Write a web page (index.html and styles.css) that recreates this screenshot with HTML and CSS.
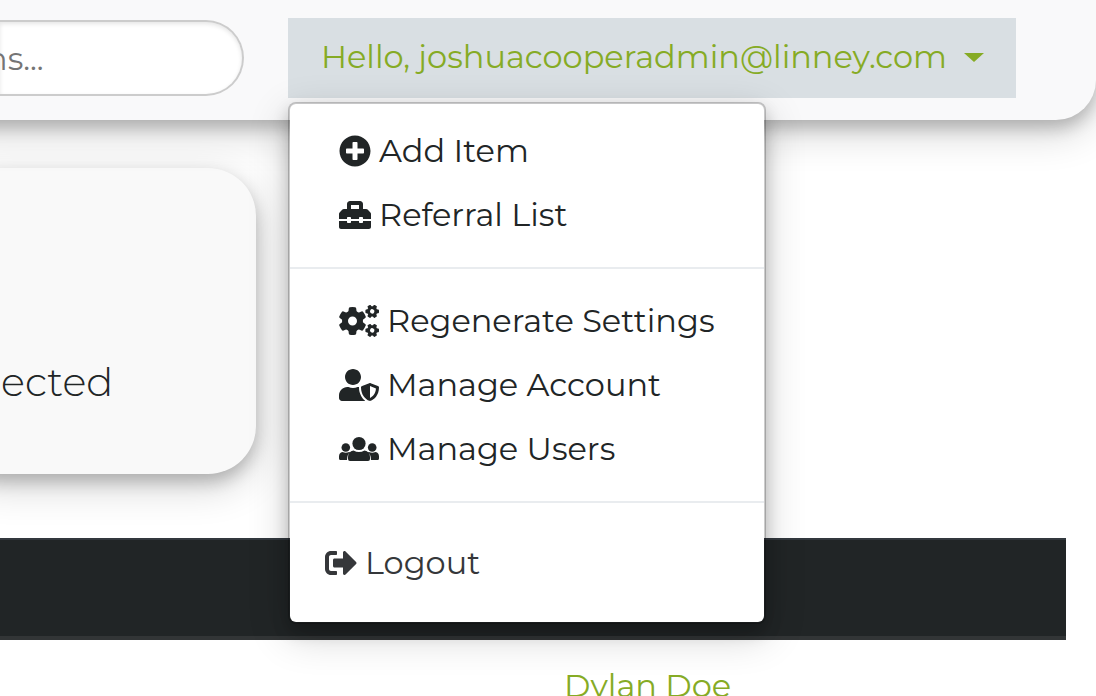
FILE: index.html
```html
<!DOCTYPE html>
<html lang="en">
<head>
  <meta charset="UTF-8">
  <title>Dashboard</title>
  <meta name="viewport" content="width=device-width, initial-scale=1.0">
  <link rel="stylesheet" href="styles.css">
</head>
<body>

  <!-- Top bar -->
  <header class="topbar">
    <div class="search-wrap">
      <input type="text" class="search" placeholder="ns..." aria-label="Search">
    </div>
    <div class="dropdown">
      <button type="button" class="dropdown-toggle">
        <span>Hello, joshuacooperadmin@linney.com</span>
        <span class="caret"></span>
      </button>

      <nav class="dropdown-menu">
        <a href="#" class="dropdown-item">
          <svg class="icon" viewBox="0 0 512 512"><path d="M256 8C119 8 8 119 8 256s111 248 248 248 248-111 248-248S393 8 256 8zm144 276c0 6.6-5.4 12-12 12h-92v92c0 6.6-5.4 12-12 12h-56c-6.6 0-12-5.4-12-12v-92h-92c-6.6 0-12-5.4-12-12v-56c0-6.6 5.4-12 12-12h92v-92c0-6.6 5.4-12 12-12h56c6.6 0 12 5.4 12 12v92h92c6.6 0 12 5.4 12 12v56z"/></svg>
          Add Item
        </a>
        <a href="#" class="dropdown-item">
          <svg class="icon" viewBox="0 0 512 512"><path d="M502.63 214.63l-45.25-45.25c-6-6-14.14-9.37-22.63-9.37H384V80c0-26.51-21.49-48-48-48H176c-26.51 0-48 21.49-48 48v80H77.25c-8.49 0-16.62 3.37-22.63 9.37L9.37 214.63c-6 6-9.37 14.14-9.37 22.63V320h128v-16c0-8.84 7.16-16 16-16h32c8.84 0 16 7.16 16 16v16h128v-16c0-8.84 7.16-16 16-16h32c8.84 0 16 7.16 16 16v16h128v-82.75c0-8.48-3.37-16.62-9.37-22.62zM320 160H192V96h128v64zm64 208c0 8.84-7.16 16-16 16h-32c-8.84 0-16-7.16-16-16v-16H192v16c0 8.84-7.16 16-16 16h-32c-8.84 0-16-7.16-16-16v-16H0v96c0 17.67 14.33 32 32 32h448c17.67 0 32-14.33 32-32v-96H384v16z"/></svg>
          Referral List
        </a>
        <hr class="divider">
        <a href="#" class="dropdown-item">
          <svg class="icon icon-wide" viewBox="0 0 40 32">
            <g id="gear">
              <circle cx="13.5" cy="16" r="7.5" fill="none" stroke="currentColor" stroke-width="6"/>
              <path id="teeth" d="M9.8 3.5q0-1 1-1.200 2.700-.4 5.400 0 1 .2 1 1.200l.5 4h-8.400zM9.800 28.500q0 1 1 1.200 2.700.4 5.400 0 1-.2 1-1.200l.5-4h-8.400z"/>
              <use href="#teeth" transform="rotate(60 13.5 16)"/>
              <use href="#teeth" transform="rotate(120 13.5 16)"/>
            </g>
            <use href="#gear" transform="translate(33.2 6.4) rotate(30) scale(.49) translate(-13.5 -16)"/>
            <use href="#gear" transform="translate(33.2 25.4) rotate(30) scale(.49) translate(-13.5 -16)"/>
          </svg>
          Regenerate Settings
        </a>
        <a href="#" class="dropdown-item">
          <svg class="icon icon-wide" viewBox="0 0 640 512"><path d="M622.3 271.1l-115.2-45c-4.1-1.6-12.6-3.7-22.2 0l-115.2 45c-10.7 4.2-17.7 14-17.7 24.9 0 111.6 68.7 188.8 132.9 213.9 9.6 3.7 18 1.6 22.2 0C558.4 489.9 640 420.5 640 296c0-10.9-7-20.7-17.7-24.9zM496 462.4V273.3l95.5 37.3c-5.6 87.1-60.9 135.4-95.5 151.8zM224 256c70.7 0 128-57.3 128-128S294.7 0 224 0 96 57.3 96 128s57.3 128 128 128zm96 40c0-2.5.8-4.8 1.1-7.2-2.5-.1-4.9-.8-7.5-.8h-16.7c-22.2 10.2-46.9 16-72.9 16s-50.6-5.8-72.9-16h-16.7C60.2 288 0 348.2 0 422.4V464c0 26.5 21.5 48 48 48h352c6.8 0 13.3-1.5 19.2-4-54-42.9-99.2-116.7-99.2-212z"/></svg>
          Manage Account
        </a>
        <a href="#" class="dropdown-item">
          <svg class="icon icon-wide" viewBox="0 0 40 32">
            <circle cx="20" cy="10.5" r="6.6"/>
            <circle cx="6.8" cy="14.5" r="4.3"/>
            <circle cx="33.2" cy="14.5" r="4.3"/>
            <path d="M14.5 17.5q5.5 3 11 0 5.500 1 5.500 6.500v2q0 2-2 2H11q-2 0-2-2v-2q0-5.500 5.500-6.500z"/>
            <path d="M3.5 19q3.300 1.500 6.600 0l1.200.3Q8 21.500 8 27H1.500Q0 27 0 25.500V23.500q0-4 3.500-4.500zM36.500 19q-3.300 1.500-6.600 0l-1.200.3Q32 21.500 32 27h6.500q1.500 0 1.500-1.500V23.500q0-4-3.500-4.500z"/>
          </svg>
          Manage Users
        </a>
        <hr class="divider">
        <button type="button" class="dropdown-item logout">
          <svg class="icon" viewBox="0 0 512 512"><path d="M497 273L329 441c-15 15-41 4.5-41-17v-96H152c-13.3 0-24-10.7-24-24v-96c0-13.3 10.7-24 24-24h136V88c0-21.4 25.9-32 41-17l168 168c9.3 9.4 9.3 24.6 0 34zM192 436v-40c0-6.6-5.4-12-12-12H96c-17.7 0-32-14.3-32-32V160c0-17.7 14.3-32 32-32h84c6.6 0 12-5.4 12-12V76c0-6.6-5.4-12-12-12H96c-53 0-96 43-96 96v192c0 53 43 96 96 96h84c6.6 0 12-5.4 12-12z"/></svg>
          Logout
        </button>
      </nav>
    </div>
  </header>

  <main>
    <section class="card">
      <p class="card-text">ected</p>
    </section>

    <table class="people">
      <thead>
        <tr><th></th></tr>
      </thead>
      <tbody>
        <tr><td><a href="#">Dylan Doe</a></td></tr>
      </tbody>
    </table>
  </main>

</body>
</html>
```
FILE: styles.css
```css
* {
  box-sizing: border-box;
}

body {
  margin: 0;
  height: 100vh;
  overflow: hidden;
  font-family: Montserrat, Inter, sans-serif;
  font-size: 32px;
  line-height: 48px;
  color: #212526;
  background: #fff;
}

a {
  color: #86ab25;
  text-decoration: none;
}

/* Top bar */
.topbar {
  position: relative;
  z-index: 10;
  display: flex;
  align-items: center;
  gap: 44px;
  height: 120px;
  margin-left: -48px;
  padding: 0 80px 4px 48px;
  background: #f9f9fa;
  border-bottom-right-radius: 40px;
  box-shadow: 0 8px 16px rgba(0, 0, 0, 0.2), 0 12px 40px rgba(0, 0, 0, 0.19);
}

.search-wrap {
  flex: none;
  width: 244px;
}

.search {
  width: 100%;
  height: 76px;
  padding: 0 32px 0 0;
  border: 2px solid #ccc;
  border-left: 0;
  border-radius: 0 38px 38px 0;
  background: #fff;
  box-shadow: inset 0 2px 4px rgba(0, 0, 0, 0.1);
  font: inherit;
  text-indent: -14px;
}

.search::placeholder {
  color: #757575;
  opacity: 1;
}

/* User dropdown */
.dropdown {
  position: relative;
  flex: 1;
}

.dropdown-toggle {
  display: flex;
  align-items: center;
  justify-content: space-between;
  width: 100%;
  height: 80px;
  padding: 0 32px 2px 33px;
  border: 0;
  background: #d9dfe3;
  color: #86ab25;
  font: inherit;
  white-space: nowrap;
}

.caret {
  border-top: 9px solid;
  border-left: 10px solid transparent;
  border-right: 10px solid transparent;
}

.dropdown-menu {
  position: absolute;
  top: 100%;
  left: 0;
  width: 478px;
  margin-top: 4px;
  padding: 15px 0 19px;
  border: 2px solid rgba(0, 0, 0, 0.2);
  border-radius: 8px;
  background: #fff;
  background-clip: padding-box;
  box-shadow: 0 8px 16px rgba(0, 0, 0, 0.2), 0 12px 40px rgba(0, 0, 0, 0.19);
}

.dropdown-item {
  display: flex;
  align-items: center;
  gap: 8px;
  width: 100%;
  height: 64px;
  padding: 0 49px;
  border: 0;
  background: none;
  color: #212526;
  font: inherit;
  white-space: nowrap;
}

.logout {
  height: 80px;
  padding: 0 35px;
  color: #35373a;
}

.divider {
  margin: 20px 0;
  border: 0;
  border-top: 2px solid #e9ecef;
}

.icon {
  flex: none;
  width: 32px;
  height: 32px;
  fill: currentColor;
}

.icon-wide {
  width: 40px;
}

/* Content */
.card {
  display: flex;
  align-items: flex-end;
  width: 304px;
  height: 306px;
  margin-top: 48px;
  margin-left: -48px;
  padding: 0 0 64px 49px;
  border-radius: 48px;
  background: #f9f9f9;
  box-shadow: 0 8px 16px rgba(0, 0, 0, 0.2), 0 12px 40px rgba(0, 0, 0, 0.19);
}

.card-text {
  margin: 0;
  font-size: 40px;
  font-weight: 300;
  line-height: 56px;
}

.people {
  width: calc(100% - 30px);
  margin-top: 64px;
  border-collapse: collapse;
}

.people th {
  height: 99px;
  padding: 0;
  border-top: 2px solid #32383e;
  border-bottom: 4px solid #323536;
  background: #212526;
}

.people td {
  padding: 22px 0 22px 564px;
}
```
